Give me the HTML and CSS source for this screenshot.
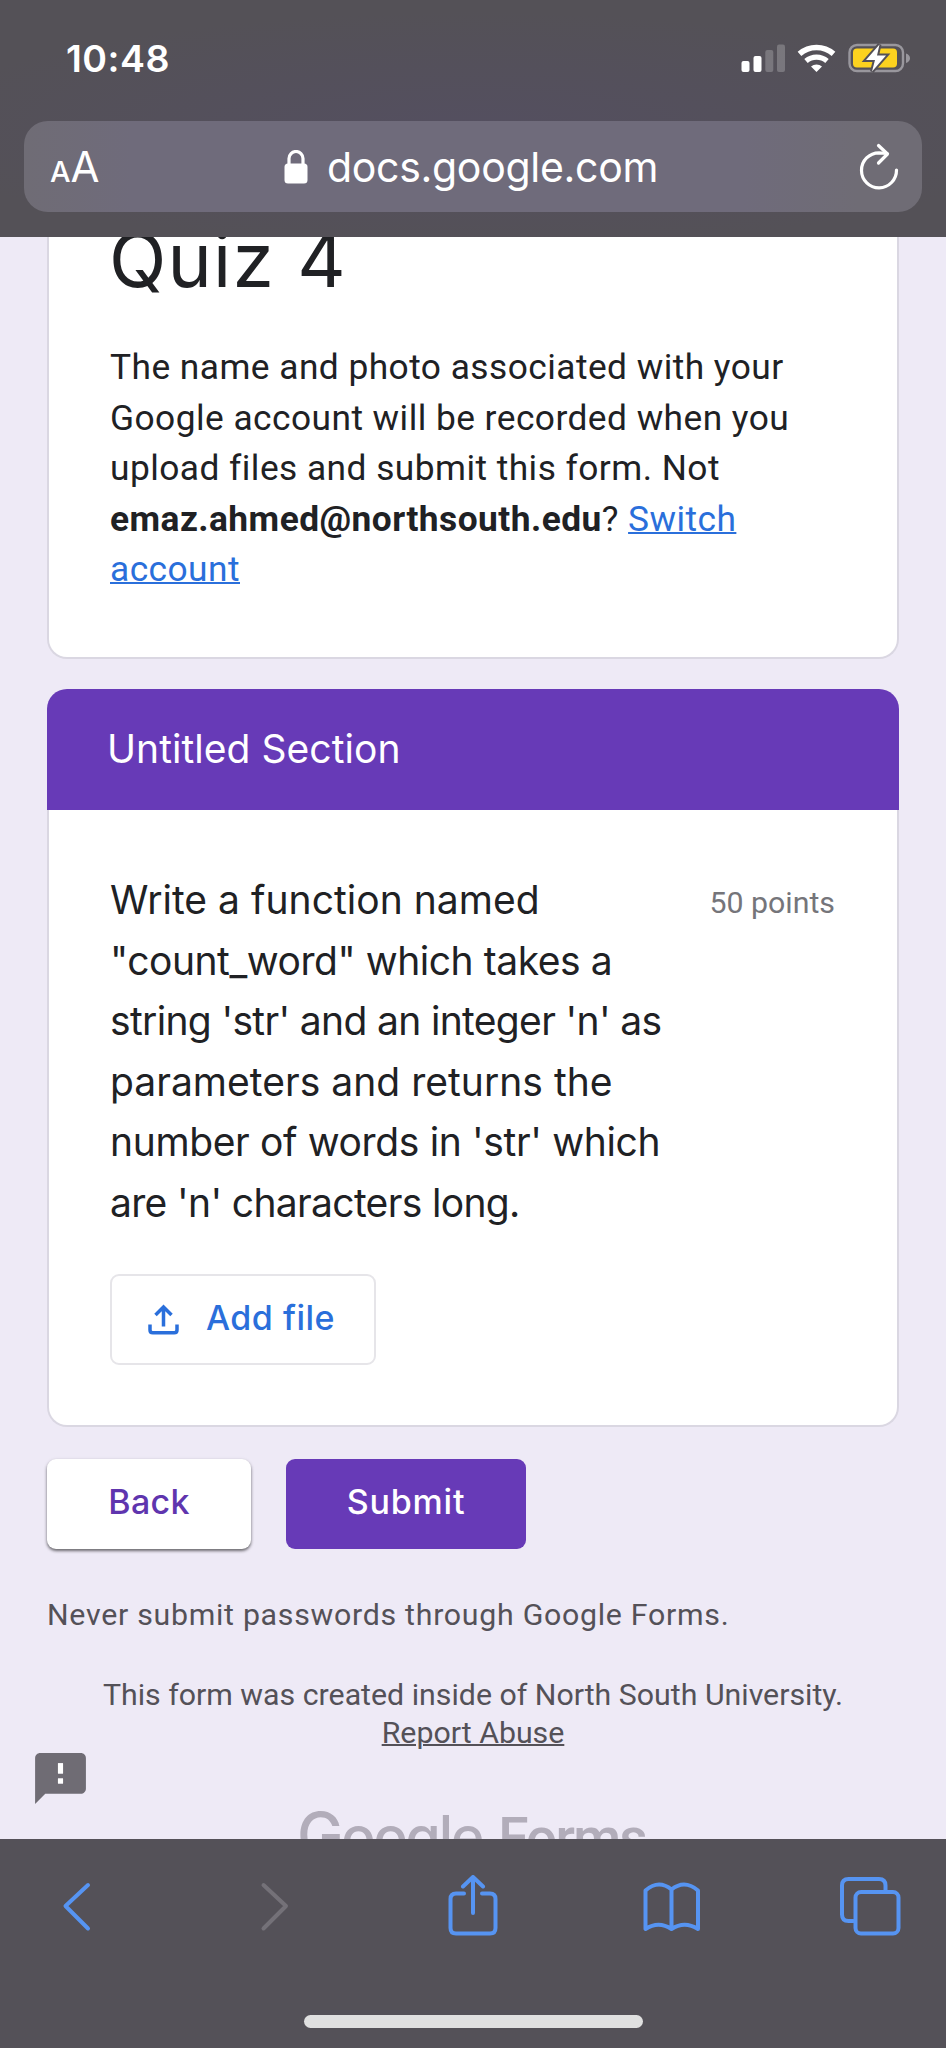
FILE: index.html
```html
<!DOCTYPE html>
<html lang="en">
<head>
<meta charset="utf-8">
<title>Quiz 4</title>
<link rel="stylesheet" href="styles.css">
</head>
<body>
<div class="phone">
  <header class="chrome-top">
    <div class="status">
      <span class="clock">10:48</span>
      <svg class="status-icons" viewBox="740 42 172 32" width="172" height="32">
        <g fill="#fff">
          <rect x="741.5" y="61" width="8" height="11" rx="2"/>
          <rect x="753.5" y="56" width="8" height="16" rx="2"/>
          <rect x="765.3" y="50" width="8" height="22" rx="2" opacity=".22"/>
          <rect x="777" y="44.5" width="8" height="27.500" rx="2" opacity=".22"/>
        </g>
        <path d="M799.500 53.800 A26 26 0 0 1 833.500 53.800" fill="none" stroke="#fff" stroke-width="5.600"/>
        <path d="M806 61 A16 16 0 0 1 827 61" fill="none" stroke="#fff" stroke-width="5.200"/>
        <path d="M811 66.500 A8.500 8.500 0 0 1 822 66.500 L816.500 72 Z" fill="#fff"/>
        <rect x="849.500" y="45" width="53.500" height="26" rx="7.500" fill="none" stroke="#99979d" stroke-width="2.400"/>
        <rect x="853" y="48.500" width="44" height="19" rx="4" fill="#fcd21f"/>
        <path d="M906 53.500 Q910 55 910 58.200 Q910 61.500 906 63 Z" fill="#99979d"/>
        <path d="M879.500 44.500 L866 60 H875 L872 71.500 L886 55.500 H877 Z" fill="#fff" stroke="#545157" stroke-width="4" paint-order="stroke"/>
      </svg>
    </div>
    <div class="url-bar">
      <span class="text-size"><span class="small-a">A</span><span class="big-a">A</span></span>
      <span class="address">
        <svg viewBox="0 0 24 34" width="24" height="34"><path d="M5 16 V8.500 A7 7 0 0 1 19 8.500 V16" fill="none" stroke="#fff" stroke-width="3.200"/><rect x=".5" y="13.500" width="23" height="20" rx="3.500" fill="#fff"/></svg>
        <span class="domain">docs.google.com</span>
      </span>
      <svg class="reload" viewBox="858 142 42 50" width="42" height="50" fill="none" stroke="#fff" stroke-width="3.200" stroke-linecap="round" stroke-linejoin="round"><path d="M896.500 170 A17.500 17.500 0 1 1 879 152.800 L887 153.500"/><path d="M878.500 145.500 L887.500 154 L878.500 163"/></svg>
    </div>
  </header>

  <main class="page">
    <section class="card intro">
      <h1 class="title">Quiz 4</h1>
      <p class="notice">The name and photo associated with your<br>Google account will be recorded when you<br>upload files and submit this form. Not<br><b>emaz.ahmed@northsouth.edu</b>? <a>Switch</a><br><a>account</a></p>
    </section>

    <section class="section">
      <h2 class="section-title">Untitled Section</h2>
      <div class="card question">
        <div class="question-row">
          <p class="prompt"><span class="wide">Write a function named</span><br><span>"count_word" which takes a</span><br><span class="tight">string 'str' and an integer 'n' as</span><br><span class="wide">parameters and returns the</span><br><span class="medium">number of words in 'str' which</span><br><span class="tight">are 'n' characters long.</span></p>
          <span class="points">50 points</span>
        </div>
        <button class="add-file">
          <svg viewBox="0 0 31 31" width="31" height="31" fill="none" stroke="#2a6fdb" stroke-width="3.500"><path d="M15.500 22.500 V3.500 M7.500 11 L15.500 3 L23.500 11"/><path d="M2 20.500 V26 Q2 28.800 4.800 28.800 H26.200 Q29 28.800 29 26 V20.500"/></svg>
          <span class="add-label">Add file</span>
        </button>
      </div>
    </section>

    <div class="actions">
      <button class="btn back">Back</button>
      <button class="btn submit">Submit</button>
    </div>
    <p class="never">Never submit passwords through Google Forms.</p>
    <p class="created">This form was created inside of North South University.<br><a>Report Abuse</a></p>
    <div class="brand"><span class="brand-google"><span class="brand-g">G</span>oogle</span><span class="brand-forms">Forms</span></div>
    <svg class="feedback" viewBox="0 0 24 24" width="61" height="61"><path fill="#6f6c74" d="M20 2H4c-1.100 0-1.990.9-1.990 2L2 22l4-4h14c1.100 0 2-.9 2-2V4c0-1.100-.9-2-2-2zm-7 12h-2v-2h2v2zm0-4h-2V6h2v4z"/><path fill="#fff" d="M11 6h2v4h-2zM11 12h2v2h-2z"/></svg>
  </main>

  <footer class="chrome-bottom">
    <nav class="toolbar">
      <svg viewBox="46 1875 62 62" width="62" height="62"><path d="M88 1885 L65.500 1906 L88 1928.500"/></svg>
      <svg viewBox="244 1875 62 62" width="62" height="62"><path class="disabled" d="M263.500 1885 L286 1906 L263.500 1928.500"/></svg>
      <svg viewBox="443 1875 62 62" width="62" height="62"><path d="M464 1893.500 H456 Q450.500 1893.500 450.500 1899 V1928 Q450.500 1933.500 456 1933.500 H490 Q495.500 1933.500 495.500 1928 V1899 Q495.500 1893.500 490 1893.500 H482"/><path d="M473 1913 V1877.500 M463 1886.500 L473 1877 L483 1886.500"/></svg>
      <svg viewBox="641.500 1875 62 62" width="62" height="62"><path d="M646 1929 V1890.500 Q659 1879 672 1889.500 Q685 1879 698.500 1890.500 V1929 Q685 1920.500 672 1929 Q659 1920.500 646 1929 Z M672 1889.500 V1929"/></svg>
      <svg viewBox="840.500 1875 62 62" width="62" height="62"><path d="M854 1921 H849 Q842.500 1921 842.500 1914.500 V1885.500 Q842.500 1879 849 1879 H879.500 Q886 1879 886 1885.500 V1891"/><rect x="856" y="1892" width="43" height="41.500" rx="5.500"/></svg>
    </nav>
    <div class="home-indicator"></div>
  </footer>
</div>
</body>
</html>
```

FILE: styles.css
```css
* { box-sizing: border-box; margin: 0; padding: 0; }
body { font-family: Roboto, sans-serif; }
button { font: inherit; border: 0; }
.phone { width: 946px; height: 2048px; display: flex; flex-direction: column; overflow: hidden; background: #eeeaf6; }

.chrome-top { flex: none; height: 237px; background: radial-gradient(ellipse 60% 50% at 50% 55%, #544f60, #545157); font-family: Inter, sans-serif; color: #fff; }
.status { height: 121px; padding: 38px 34px 0 66px; display: flex; justify-content: space-between; align-items: flex-start; }
.clock { font-size: 37.500px; font-weight: 600; line-height: 42px; letter-spacing: .5px; }
.status-icons { margin-top: 4px; }
.url-bar { margin: 0 24px; height: 91px; border-radius: 24px; padding: 0 22px 0 26px; display: grid; grid-template-columns: 1fr auto 1fr; align-items: center; background: linear-gradient(90deg, #6f6c75, #6f6b7b 12%, #6f6b7b 80%, #6f6c75 93%); }
.text-size { line-height: 40px; padding-top: 10px; }
.small-a { font-size: 29px; font-weight: 500; }
.big-a { font-size: 42px; }
.address { display: flex; align-items: center; gap: 19px; margin: 0 4px 0 -4px; }
.domain { font-size: 41px; line-height: 50px; letter-spacing: -.3px; }
.reload { justify-self: end; }

.page { position: relative; flex: none; height: 1602px; overflow: hidden; padding: 0 47px; color: #202124; }
.card { background: #fff; border: 2px solid #dad7e2; border-top: 0; border-radius: 0 0 20px 20px; padding: 0 62px; }
.intro { height: 422px; display: flow-root; }
.title { font: 400 75px/90px Inter, sans-serif; letter-spacing: 1.200px; margin: -22px 0 0 -2px; }
.notice { font-size: 35.300px; line-height: 50.500px; letter-spacing: .46px; margin: 37px 0 0 -1px; }
.notice a { color: #2a6fdb; text-decoration: underline; text-decoration-thickness: 2px; }

.section { margin-top: 30px; }
.section-title { height: 121px; padding-left: 60px; border-radius: 20px 20px 0 0; background: #673ab7; color: #fff; font: 400 39px/119px Inter, sans-serif; letter-spacing: .05px; }
.question { height: 617px; padding-top: 60px; }
.question-row { display: flex; justify-content: space-between; }
.prompt { font: 400 39px/60.600px Inter, sans-serif; white-space: nowrap; letter-spacing: -.45px; margin-left: -1px; }
.prompt .wide { letter-spacing: .03px; }
.prompt .medium { letter-spacing: -.36px; }
.prompt .tight { letter-spacing: -.66px; }
.points { font-size: 30.300px; line-height: 36px; margin-top: 15px; color: #75757a; letter-spacing: 0; }
.add-file { margin: 40px 0 0 -1px; width: 266px; height: 91px; border: 2px solid #e6e5e9; border-radius: 9px; background: #fff; display: flex; align-items: center; gap: 27px; padding-left: 36px; color: #2a6fdb; font: 500 34px/40px Inter, sans-serif; white-space: nowrap; }
.add-label { padding-bottom: 3px; letter-spacing: .5px; }

.actions { margin-top: 32px; display: flex; gap: 35px; }
.btn { height: 90px; border-radius: 9px; padding-bottom: 4px; font: 500 34px/40px Inter, sans-serif; }
.back { width: 204px; background: #fff; color: #5f35ae; box-shadow: 0 2px 3px rgba(0,0,0,.5), 0 1px 4px rgba(0,0,0,.1); letter-spacing: .3px; }
.submit { width: 240px; background: #673ab7; color: #fff; letter-spacing: .8px; }
.never { margin-top: 47px; font-size: 30.300px; line-height: 38px; letter-spacing: .72px; color: #545158; }
.created { margin-top: 42px; text-align: center; font-size: 30.300px; line-height: 38px; color: #545158; }
.created a { text-decoration: underline; text-decoration-thickness: 2px; }
.brand { margin-top: 48px; height: 70px; padding-left: 250px; display: flex; gap: 16px; align-items: baseline; color: #b2adba; white-space: nowrap; }
.brand-google { font: 500 57px/70px Inter, sans-serif; letter-spacing: -2.200px; }
.brand-g { font-size: 62px; }
.brand-forms { font-size: 55px; font-weight: 500; letter-spacing: -1.800px; }
.feedback { position: absolute; left: 30px; top: 1511px; }

.chrome-bottom { flex: 1; background: #545158; }
.toolbar { padding: 36px 44.500px 0 46px; display: flex; justify-content: space-between; }
.toolbar path, .toolbar rect { fill: none; stroke: #5694f2; stroke-width: 4; stroke-linecap: round; stroke-linejoin: round; }
.toolbar .disabled { stroke: #747178; }
.home-indicator { margin: 78px auto 0; width: 339px; height: 13px; border-radius: 7px; background: #e0e0e0; }
```
